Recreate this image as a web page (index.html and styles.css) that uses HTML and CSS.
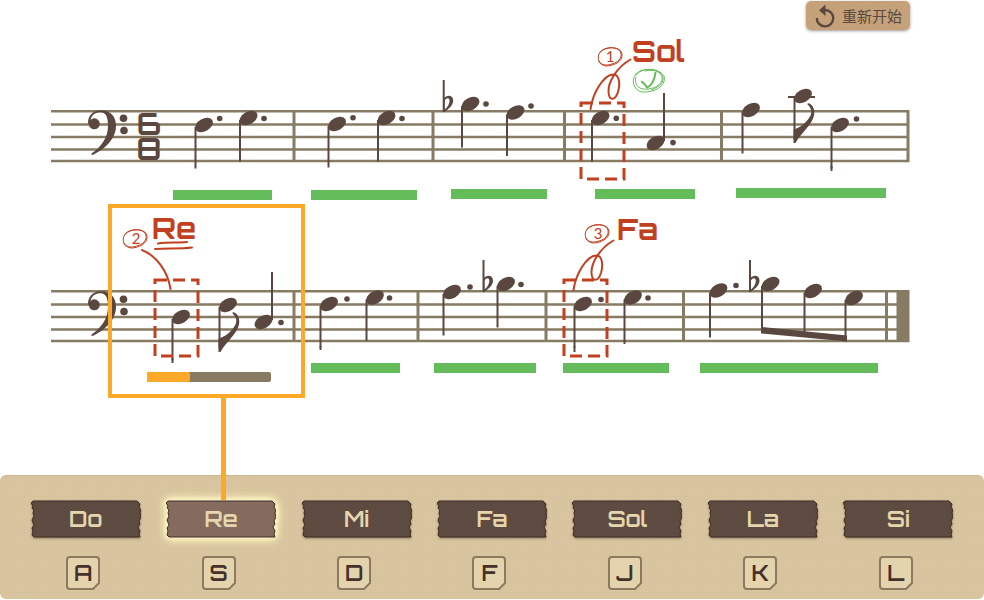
FILE: index.html
```html
<!DOCTYPE html>
<html lang="zh-CN">
<head>
<meta charset="utf-8">
<meta name="viewport" content="width=device-width, initial-scale=1">
<title>Bass clef practice</title>
<link rel="stylesheet" href="styles.css">
</head>
<body>
<header class="toolbar">
  <button class="restart" type="button">
    <svg class="restart-icon" viewBox="0 0 20 24" aria-hidden="true">
      <path class="restart-arc" d="M1.800 14A8.200 8.200 0 1 0 10 6H8"/>
      <path class="restart-head" d="M4 6.200 10.500 0.500v11.500z"/>
    </svg>
    <span>重新开始</span>
  </button>
</header>

<main>
<svg class="score" viewBox="0 30 984 445" role="img" aria-label="Score">
  <defs>
    <g id="head"><ellipse rx="9.600" ry="6.200" transform="rotate(-29)"/></g>
    <g id="down"><use href="#head"/><path class="stem" d="M-8.500 2V43.500"/></g>
    <g id="up"><use href="#head"/><path class="stem" d="M8.500-2V-50"/></g>
    <path id="flag" d="M-9.500 33.500C-3 32 4 26 7.500 19.500C9.500 15 7.500 11 4.500 8.500Q4 7 6 7.200C10.500 9.500 12 14 11 19.500C9 29 -2 37-7.500 47H-9.500Z"/>
    <g id="flat">
      <path class="stem" d="M0-31V1"/>
      <path fill-rule="evenodd" d="M0-12.500C3-16.500 9.500-16.500 9.500-10.500C9.500-5 4-1.500 0 1.500ZM1-10.500V-1.500C4-4 6-7.500 5.800-10.500C5.500-13.500 3-13.500 1-10.500Z"/>
    </g>
    <g id="clef">
      <circle cx="94.300" cy="123.800" r="5.500"/>
      <path d="M88.200 124.500C87 116 93 110.200 101 110.200C111 110.200 116 117 116 126C116 139 104 150 92.500 155Q91 155 91.500 153.500C101 147 108 138 108 126C108 117 106 112.500 100.500 112.300C95 112 90.500 116 90.500 121.500Z"/>
      <circle cx="123.500" cy="118.300" r="3.800"/><circle cx="124" cy="130.500" r="3.800"/>
    </g>
    <g id="ring">
      <path d="M-10-5C-4-11 11-11 12-3C13 5 3 9-4 9C-11 8-13 2-11-3C-8-10 4-11 9-7C14-2 10 5 2 7C-4 9-10 8-11 4"/>
    </g>
    <path id="swirl" d="M630.500 59.500C617 67 608 82 608.500 92C609 101 615 101 618 92C621 81 618 74 613 74.500C604 75 593 92 590.500 109"/>
  </defs>

  <g class="staff">
    <path d="M51 111.300H909M51 124.500H909M51 137H909M51 149.500H909M51 161H909"/>
    <path class="barline" d="M294 111V161M433 111V161M564.500 111V161M721.500 111V161M908 110V162"/>
    <path d="M51 291.300H909M51 304.500H909M51 317H909M51 329.500H909M51 341H909"/>
    <path class="barline" d="M294 291V341M418 291V341M546 291V341M683.500 291V341M886.500 291V341"/>
    <path class="final" d="M903 290V342"/>
  </g>

  <g class="notes">
    <use href="#clef"/>
    <text class="meter" x="149" y="135">6</text>
    <text class="meter" x="149" y="160">8</text>
    <use href="#down" x="204" y="125"/><circle cx="219.700" cy="118.500" r="2.800"/>
    <use href="#down" x="248.500" y="118"/><circle cx="264" cy="118.500" r="2.800"/>
    <use href="#down" x="337" y="124"/><circle cx="353" cy="117.700" r="2.800"/>
    <use href="#down" x="386.500" y="118"/><circle cx="402" cy="118.500" r="2.800"/>
    <use href="#flat" x="443.700" y="111"/>
    <use href="#down" x="470.500" y="104"/><circle cx="486" cy="104" r="2.800"/>
    <use href="#down" x="515.500" y="112.500"/><circle cx="531" cy="106" r="2.800"/>
    <use href="#down" x="600.500" y="118"/><circle cx="616.300" cy="118.300" r="2.800"/>
    <use href="#up" x="655.500" y="143"/><circle cx="673" cy="142.600" r="2.800"/>
    <use href="#down" x="751" y="110"/>
    <use href="#down" x="803" y="96"/><use href="#flag" x="803" y="96"/><path class="stem" d="M788 97H815"/>
    <use href="#down" x="840" y="125"/><path class="stem" d="M831.500 166V171"/><circle cx="856.500" cy="119" r="2.800"/>

    <use href="#clef" y="181"/>
    <use href="#down" x="181" y="317"/><path class="stem" d="M172.500 358V363"/>
    <use href="#down" x="228" y="305"/><use href="#flag" x="228" y="305"/>
    <use href="#up" x="263.500" y="322"/><path class="stem" d="M272 280V275"/><circle cx="281" cy="322.500" r="2.800"/>
    <use href="#down" x="329" y="304"/><path class="stem" d="M320.500 346V350"/><circle cx="347" cy="299" r="2.800"/>
    <use href="#down" x="375" y="297.500"/><circle cx="389.500" cy="298" r="2.800"/>
    <use href="#down" x="452" y="292"/><circle cx="470" cy="287" r="2.800"/>
    <use href="#flat" x="483.500" y="291"/>
    <use href="#down" x="506" y="284"/><circle cx="521" cy="284.500" r="2.800"/>
    <use href="#down" x="583" y="304"/><path class="stem" d="M574.500 346V352"/><circle cx="601" cy="299.500" r="2.800"/>
    <use href="#down" x="633" y="297.500"/><path class="stem" d="M624.500 340V344"/><circle cx="648" cy="298" r="2.800"/>
    <use href="#down" x="718.500" y="290.500"/><path class="stem" d="M710 333V337.500"/><circle cx="736" cy="285.500" r="2.800"/>
    <use href="#flat" x="750" y="291"/>
    <use href="#down" x="770.500" y="284"/><path class="stem" d="M762 326V333"/>
    <use href="#down" x="813" y="291"/>
    <use href="#down" x="854" y="298"/>
    <path d="M761 327L847 335.500V341.500L761 333.500Z"/>
  </g>

  <g class="done">
    <rect x="173" y="190" width="99" height="10"/>
    <rect x="311" y="190" width="106" height="10"/>
    <rect x="451" y="189" width="96" height="10"/>
    <rect x="595" y="189" width="100" height="10"/>
    <rect x="736" y="188" width="150" height="10"/>
    <rect x="311" y="363" width="89" height="10"/>
    <rect x="434" y="363" width="102" height="10"/>
    <rect x="563" y="363" width="106" height="10"/>
    <rect x="700" y="363" width="178" height="10"/>
  </g>

  <rect class="progress-track" x="147" y="372" width="124" height="10" rx="2"/>
  <rect class="progress-value" x="147" y="372" width="43" height="10" rx="2"/>

  <g class="ink">
    <rect class="dashes" x="581" y="103" width="43" height="76"/>
    <rect class="dashes" x="155" y="280" width="43" height="76"/>
    <rect class="dashes" x="564" y="280" width="43" height="76"/>
    <use class="thick" href="#swirl"/>
    <use class="thick" href="#swirl" x="-17" y="181"/>
    <path class="thick" d="M142 250C157 256 168 272 170.500 289"/>
    <path class="thick" d="M158 243.500C168 242 177 243 187 242M155 249C167 248 180 249 192 247.500"/>
    <use href="#ring" x="610" y="57"/>
    <use href="#ring" x="135" y="239"/>
    <use href="#ring" x="597" y="234"/>
    <text class="number" x="610" y="62">1</text>
    <text class="number" x="136" y="244">2</text>
    <text class="number" x="598" y="239">3</text>
    <text class="answer" x="632" y="62">Sol</text>
    <text class="answer" x="152" y="239">Re</text>
    <text class="answer" x="617" y="240">Fa</text>
  </g>

  <g class="tick">
    <path d="M636 75C641 68 658 67 664 76C667 87 652 93 642 92C633 90 631 80 636 74C643 67 659 68 662 76C664 86 651 90 643 89C637 88 634 82 636 77M645 71C653 69 661 71 663 78C664 84 656 88 651 90"/>
    <path class="tick-mark" d="M641 81.500C644 82 645 85 647 87.500C651 86 655 80 655.500 72"/>
  </g>

  <g class="current">
    <rect x="110" y="206" width="193" height="190"/>
    <path class="connector" d="M223.500 398V500"/>
  </g>
</svg>

<svg class="shapes" aria-hidden="true">
  <defs>
    <pattern id="grain" width="4" height="4" patternUnits="userSpaceOnUse"><path class="grain" d="M-1 5L5-1M-1 1L1-1M3 5L5 3"/></pattern>
    <symbol id="plank" viewBox="0 0 110 38" preserveAspectRatio="none">
      <path d="M2 1H106L109 4 108 7 110 10 109 13 110 17 108 21 109 24 107 27 109 31 108 34 109 37H3L1 35 2 31 1 28 3 25 1 20 3 16 2 13 3 10 1 8 2 6 0 3Z"/>
      <path class="plank-grain" d="M3 2H106V36H3Z"/>
    </symbol>
    <symbol id="cap" viewBox="0 0 34 34"><path d="M4 1H30Q33 1 33 4V27L27 33H4Q1 33 1 30V4Q1 1 4 1Z"/></symbol>
  </defs>
</svg>

<section class="keyboard" aria-label="Note keys">
  <div class="key"><button class="note" type="button" aria-keyshortcuts="A"><svg class="plank"><use href="#plank"/></svg><span>Do</span></button><kbd class="cap"><svg class="cap-shape"><use href="#cap"/></svg><span>A</span></kbd></div>
  <div class="key"><button class="note active" type="button" aria-keyshortcuts="S"><svg class="plank"><use href="#plank"/></svg><span>Re</span></button><kbd class="cap"><svg class="cap-shape"><use href="#cap"/></svg><span>S</span></kbd></div>
  <div class="key"><button class="note" type="button" aria-keyshortcuts="D"><svg class="plank"><use href="#plank"/></svg><span>Mi</span></button><kbd class="cap"><svg class="cap-shape"><use href="#cap"/></svg><span>D</span></kbd></div>
  <div class="key"><button class="note" type="button" aria-keyshortcuts="F"><svg class="plank"><use href="#plank"/></svg><span>Fa</span></button><kbd class="cap"><svg class="cap-shape"><use href="#cap"/></svg><span>F</span></kbd></div>
  <div class="key"><button class="note" type="button" aria-keyshortcuts="J"><svg class="plank"><use href="#plank"/></svg><span>Sol</span></button><kbd class="cap"><svg class="cap-shape"><use href="#cap"/></svg><span>J</span></kbd></div>
  <div class="key"><button class="note" type="button" aria-keyshortcuts="K"><svg class="plank"><use href="#plank"/></svg><span>La</span></button><kbd class="cap"><svg class="cap-shape"><use href="#cap"/></svg><span>K</span></kbd></div>
  <div class="key"><button class="note" type="button" aria-keyshortcuts="L"><svg class="plank"><use href="#plank"/></svg><span>Si</span></button><kbd class="cap"><svg class="cap-shape"><use href="#cap"/></svg><span>L</span></kbd></div>
</section>
</main>
</body>
</html>
```

FILE: styles.css
```css
:root {
  --brown: #5a4840;
  --line: #877b63;
  --red: #c04020;
  --green: #65bc5b;
  --orange: #fca929;
  --display: "Orbitron", "DejaVu Sans", sans-serif;
}

* { box-sizing: border-box; }

body {
  margin: 0;
  background: #fff;
  color: var(--brown);
  font-family: var(--display);
}

.toolbar {
  display: flex;
  justify-content: flex-end;
  padding: 1px 74px 0;
}

.restart {
  display: flex;
  align-items: center;
  gap: 7px;
  height: 29px;
  padding: 0 8px 0 9px;
  border: 0;
  border-radius: 5px;
  background: repeating-linear-gradient(135deg, #c3a077 0 2px, #c6a37a 2px 4px);
  box-shadow: 0 1px 3px rgba(60, 50, 40, 0.5);
  color: var(--brown);
  font: 15px/20px "Noto Sans CJK SC", sans-serif;
}

.restart-icon { width: 20px; height: 24px; }
.restart-arc { fill: none; stroke: var(--brown); stroke-width: 2.4; }
.restart-head { fill: var(--brown); }

.score {
  display: block;
  position: relative;
  z-index: 1;
  width: 100%;
  overflow: visible;
  pointer-events: none;
}

.staff { fill: none; stroke: var(--line); stroke-width: 2.6; }
.barline { stroke-width: 3; }
.final { stroke-width: 13; }

.notes { fill: var(--brown); }
.stem { fill: none; stroke: var(--brown); stroke-width: 2; }
.meter { font: bold 30px var(--display); text-anchor: middle; }

.done { fill: var(--green); }
.progress-track { fill: var(--line); }
.progress-value { fill: var(--orange); }

.ink { fill: none; stroke: var(--red); stroke-width: 1; stroke-linecap: round; }
.thick { stroke-width: 2; }
.dashes { stroke-width: 3; stroke-dasharray: 12 6; stroke-linecap: butt; }
.answer { fill: var(--red); stroke: none; font: bold 29px var(--display); }
.number { fill: var(--red); stroke: none; font: 15px Lato, sans-serif; text-anchor: middle; }

.tick { fill: none; stroke: var(--green); stroke-width: 1; }
.tick-mark { stroke-width: 2; }

.current { fill: none; stroke: var(--orange); stroke-width: 4; }
.connector { stroke-width: 5; }

.shapes { position: absolute; width: 0; height: 0; }
.grain { stroke: #fff; stroke-opacity: 0.03; }
.plank-grain { fill: url(#grain); stroke: none; }

.keyboard {
  display: grid;
  grid-template-columns: repeat(7, 1fr);
  padding: 25px 18px 9px;
  border-radius: 6px;
  background:
    repeating-linear-gradient(90deg, rgba(120, 90, 40, 0.02) 0 1px, transparent 1px 3px),
    repeating-linear-gradient(0deg, rgba(120, 90, 40, 0.02) 0 1px, transparent 1px 3px),
    #d9c6a0;
  box-shadow: inset 0 1px 1px #cbb992;
}

.key {
  display: flex;
  flex-direction: column;
  align-items: center;
  gap: 18px;
}

.note {
  position: relative;
  width: 110px;
  max-width: 100%;
  height: 38px;
  padding: 0;
  border: 0;
  background: none;
  color: #e6d6ad;
  font: 600 22px/38px var(--display);
}

.note span, .cap span { position: relative; }

.plank {
  position: absolute;
  inset: 0;
  width: 100%;
  height: 100%;
  overflow: visible;
  fill: #5c4a40;
  stroke: #402c28;
  stroke-width: 1;
  filter: drop-shadow(0 1px 1px rgba(70, 45, 25, 0.5));
}

.active .plank {
  fill: #836a5d;
  filter: drop-shadow(0 0 2px #fffbd0) drop-shadow(0 0 3px #fff8c4) drop-shadow(0 0 4px #fff0b8);
}

.cap {
  position: relative;
  width: 34px;
  height: 34px;
  margin-right: 5px;
  color: #46312a;
  font: 600 22px/34px var(--display);
  text-align: center;
}

.cap-shape {
  position: absolute;
  inset: 0;
  width: 100%;
  height: 100%;
  fill: #e3d4ae;
  stroke: #8c7960;
  stroke-width: 2;
}
```
